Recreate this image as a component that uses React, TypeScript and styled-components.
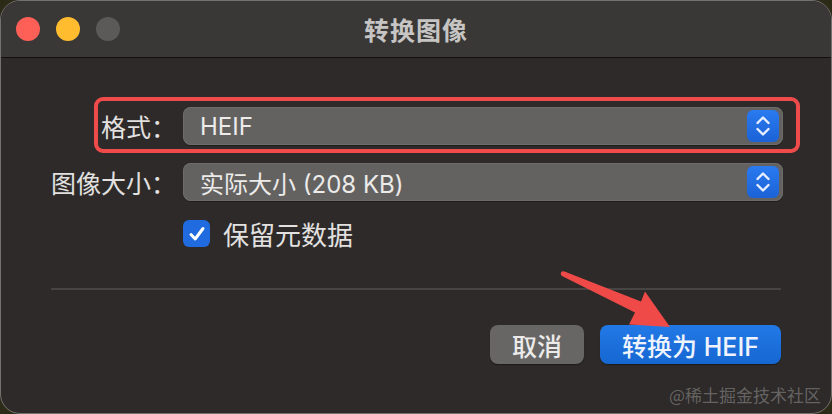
import styled, {createGlobalStyle} from "styled-components";

const GlobalStyle = createGlobalStyle`
    html, body {
        margin: 0;
        padding: 0;
        background: #2c2b17;
    }

    body {
        font-family: Inter, "Noto Sans CJK SC", sans-serif;
        -webkit-font-smoothing: antialiased;
    }
`

const Window = styled.div`
    position: relative;
    width: 832px;
    height: 414px;
    box-sizing: border-box;
    border: 1px solid #74726f;
    border-radius: 20px;
    overflow: hidden;
    background: #2d2a29;
    display: flex;
    flex-direction: column;
`

const TitleBar = styled.div`
    height: 56px;
    flex-shrink: 0;
    display: grid;
    grid-template-columns: 1fr auto 1fr;
    align-items: center;
    background: #3a3836;
    border-bottom: 1px solid #121110;
    padding: 0 15px;
`

const Lights = styled.div`
    display: flex;
    gap: 16px;
`

const Light = styled.span<{ $color: string }>`
    width: 24px;
    height: 24px;
    border-radius: 50%;
    background: ${p => p.$color};
`

const Title = styled.div`
    font-size: 25px;
    font-weight: 700;
    color: #c6c5c4;
    letter-spacing: 1px;
`

const Body = styled.div`
    padding: 49px 50px 0 0;
    display: flex;
    flex-direction: column;
`

const Row = styled.div<{ $highlight?: boolean }>`
    position: relative;
    display: grid;
    grid-template-columns: 175px 600px;
    column-gap: 7px;
    align-items: center;
    margin-bottom: 18px;

    &::after {
        content: "";
        display: ${p => p.$highlight ? 'block' : 'none'};
        position: absolute;
        left: 93px;
        width: 706px;
        top: -10px;
        bottom: -8px;
        box-sizing: border-box;
        border: 4px solid #ee4b4a;
        border-radius: 9px;
        pointer-events: none;
    }
`

const Label = styled.label`
    text-align: right;
    font-size: 25px;
    color: #e2e1e0;
`

const Select = styled.div`
    height: 38px;
    box-sizing: border-box;
    border-radius: 8px;
    background: #636260;
    box-shadow: inset 0 0 0 1px #6d6c6a, 0 1px 0 #1f1d1c;
    display: flex;
    align-items: center;
    justify-content: space-between;
    padding: 0 4px 0 17px;
    font-size: 24px;
    color: #ecebea;
`

const Stepper = styled.span`
    width: 32px;
    height: 32px;
    border-radius: 6px;
    background: linear-gradient(#2a7af0, #1b62d6);
    display: flex;
    align-items: center;
    justify-content: center;
`

const CheckRow = styled.div`
    display: flex;
    align-items: center;
    gap: 13px;
    margin: -4px 0 0 182px;
    font-size: 26px;
    color: #e2e1e0;
`

const Checkbox = styled.span`
    width: 27px;
    height: 27px;
    border-radius: 6px;
    background: #1f6bdf;
    display: flex;
    align-items: center;
    justify-content: center;
`

const Divider = styled.hr`
    border: none;
    height: 2px;
    background: #474544;
    margin: 36px 0 0 50px;
`

const Buttons = styled.div`
    display: flex;
    justify-content: flex-end;
    gap: 16px;
    margin-top: 35px;
`

const Button = styled.button<{ $primary?: boolean }>`
    height: 39px;
    padding: 0 22px;
    border: none;
    border-radius: 8px;
    font-family: Inter, "Noto Sans CJK SC", sans-serif;
    font-size: 25px;
    font-weight: 500;
    color: ${p => p.$primary ? '#eef3fd' : '#ecebea'};
    background: ${p => p.$primary ? 'linear-gradient(#2279e6, #1667d2)' : '#676665'};
    box-shadow: 0 1px 1px rgba(0, 0, 0, .4);
`

const Arrow = styled.svg`
    position: absolute;
    left: 0;
    top: 0;
    pointer-events: none;
`

const Watermark = styled.div`
    position: absolute;
    right: 10px;
    bottom: 6px;
    font-family: "Noto Sans CJK SC", sans-serif;
    font-size: 17px;
    color: rgba(150, 150, 150, .55);
`

function Chevrons() {
    return (
        <svg width="18" height="24" viewBox="0 0 18 24" fill="none" stroke="#e8f0ff"
             strokeWidth="2.4" strokeLinecap="round" strokeLinejoin="round">
            <path d="M3.5 9 L9 3.5 L14.5 9"/>
            <path d="M3.5 15 L9 20.5 L14.5 15"/>
        </svg>
    )
}

function App() {
    return (
        <>
            <GlobalStyle/>
            <Window>
                <TitleBar>
                    <Lights>
                        <Light $color="#fe5f57"/>
                        <Light $color="#febc2e"/>
                        <Light $color="#5b5a59"/>
                    </Lights>
                    <Title>转换图像</Title>
                    <span/>
                </TitleBar>
                <Body>
                    <Row $highlight>
                        <Label>格式：</Label>
                        <Select>
                            HEIF
                            <Stepper><Chevrons/></Stepper>
                        </Select>
                    </Row>
                    <Row>
                        <Label>图像大小：</Label>
                        <Select>
                            实际大小 (208 KB)
                            <Stepper><Chevrons/></Stepper>
                        </Select>
                    </Row>
                    <CheckRow>
                        <Checkbox>
                            <svg width="20" height="20" viewBox="0 0 20 20" fill="none" stroke="#ffffff"
                                 strokeWidth="3" strokeLinecap="round" strokeLinejoin="round">
                                <path d="M4 10.5 L8.2 15 L16 4.5"/>
                            </svg>
                        </Checkbox>
                        保留元数据
                    </CheckRow>
                    <Divider/>
                    <Buttons>
                        <Button>取消</Button>
                        <Button $primary>转换为 HEIF</Button>
                    </Buttons>
                </Body>
                <Arrow width="832" height="414" viewBox="0 0 832 414">
                    <path d="M560 271.5 Q561 269.5 563.5 270.5 L640 300.5 L644 290.5 L669 326 L628 323.5 L634 311.5 L561 275 Q559 273.5 560 271.5 Z"
                          fill="#ef4a48"/>
                </Arrow>
                <Watermark>@稀土掘金技术社区</Watermark>
            </Window>
        </>
    )
}

export default App
